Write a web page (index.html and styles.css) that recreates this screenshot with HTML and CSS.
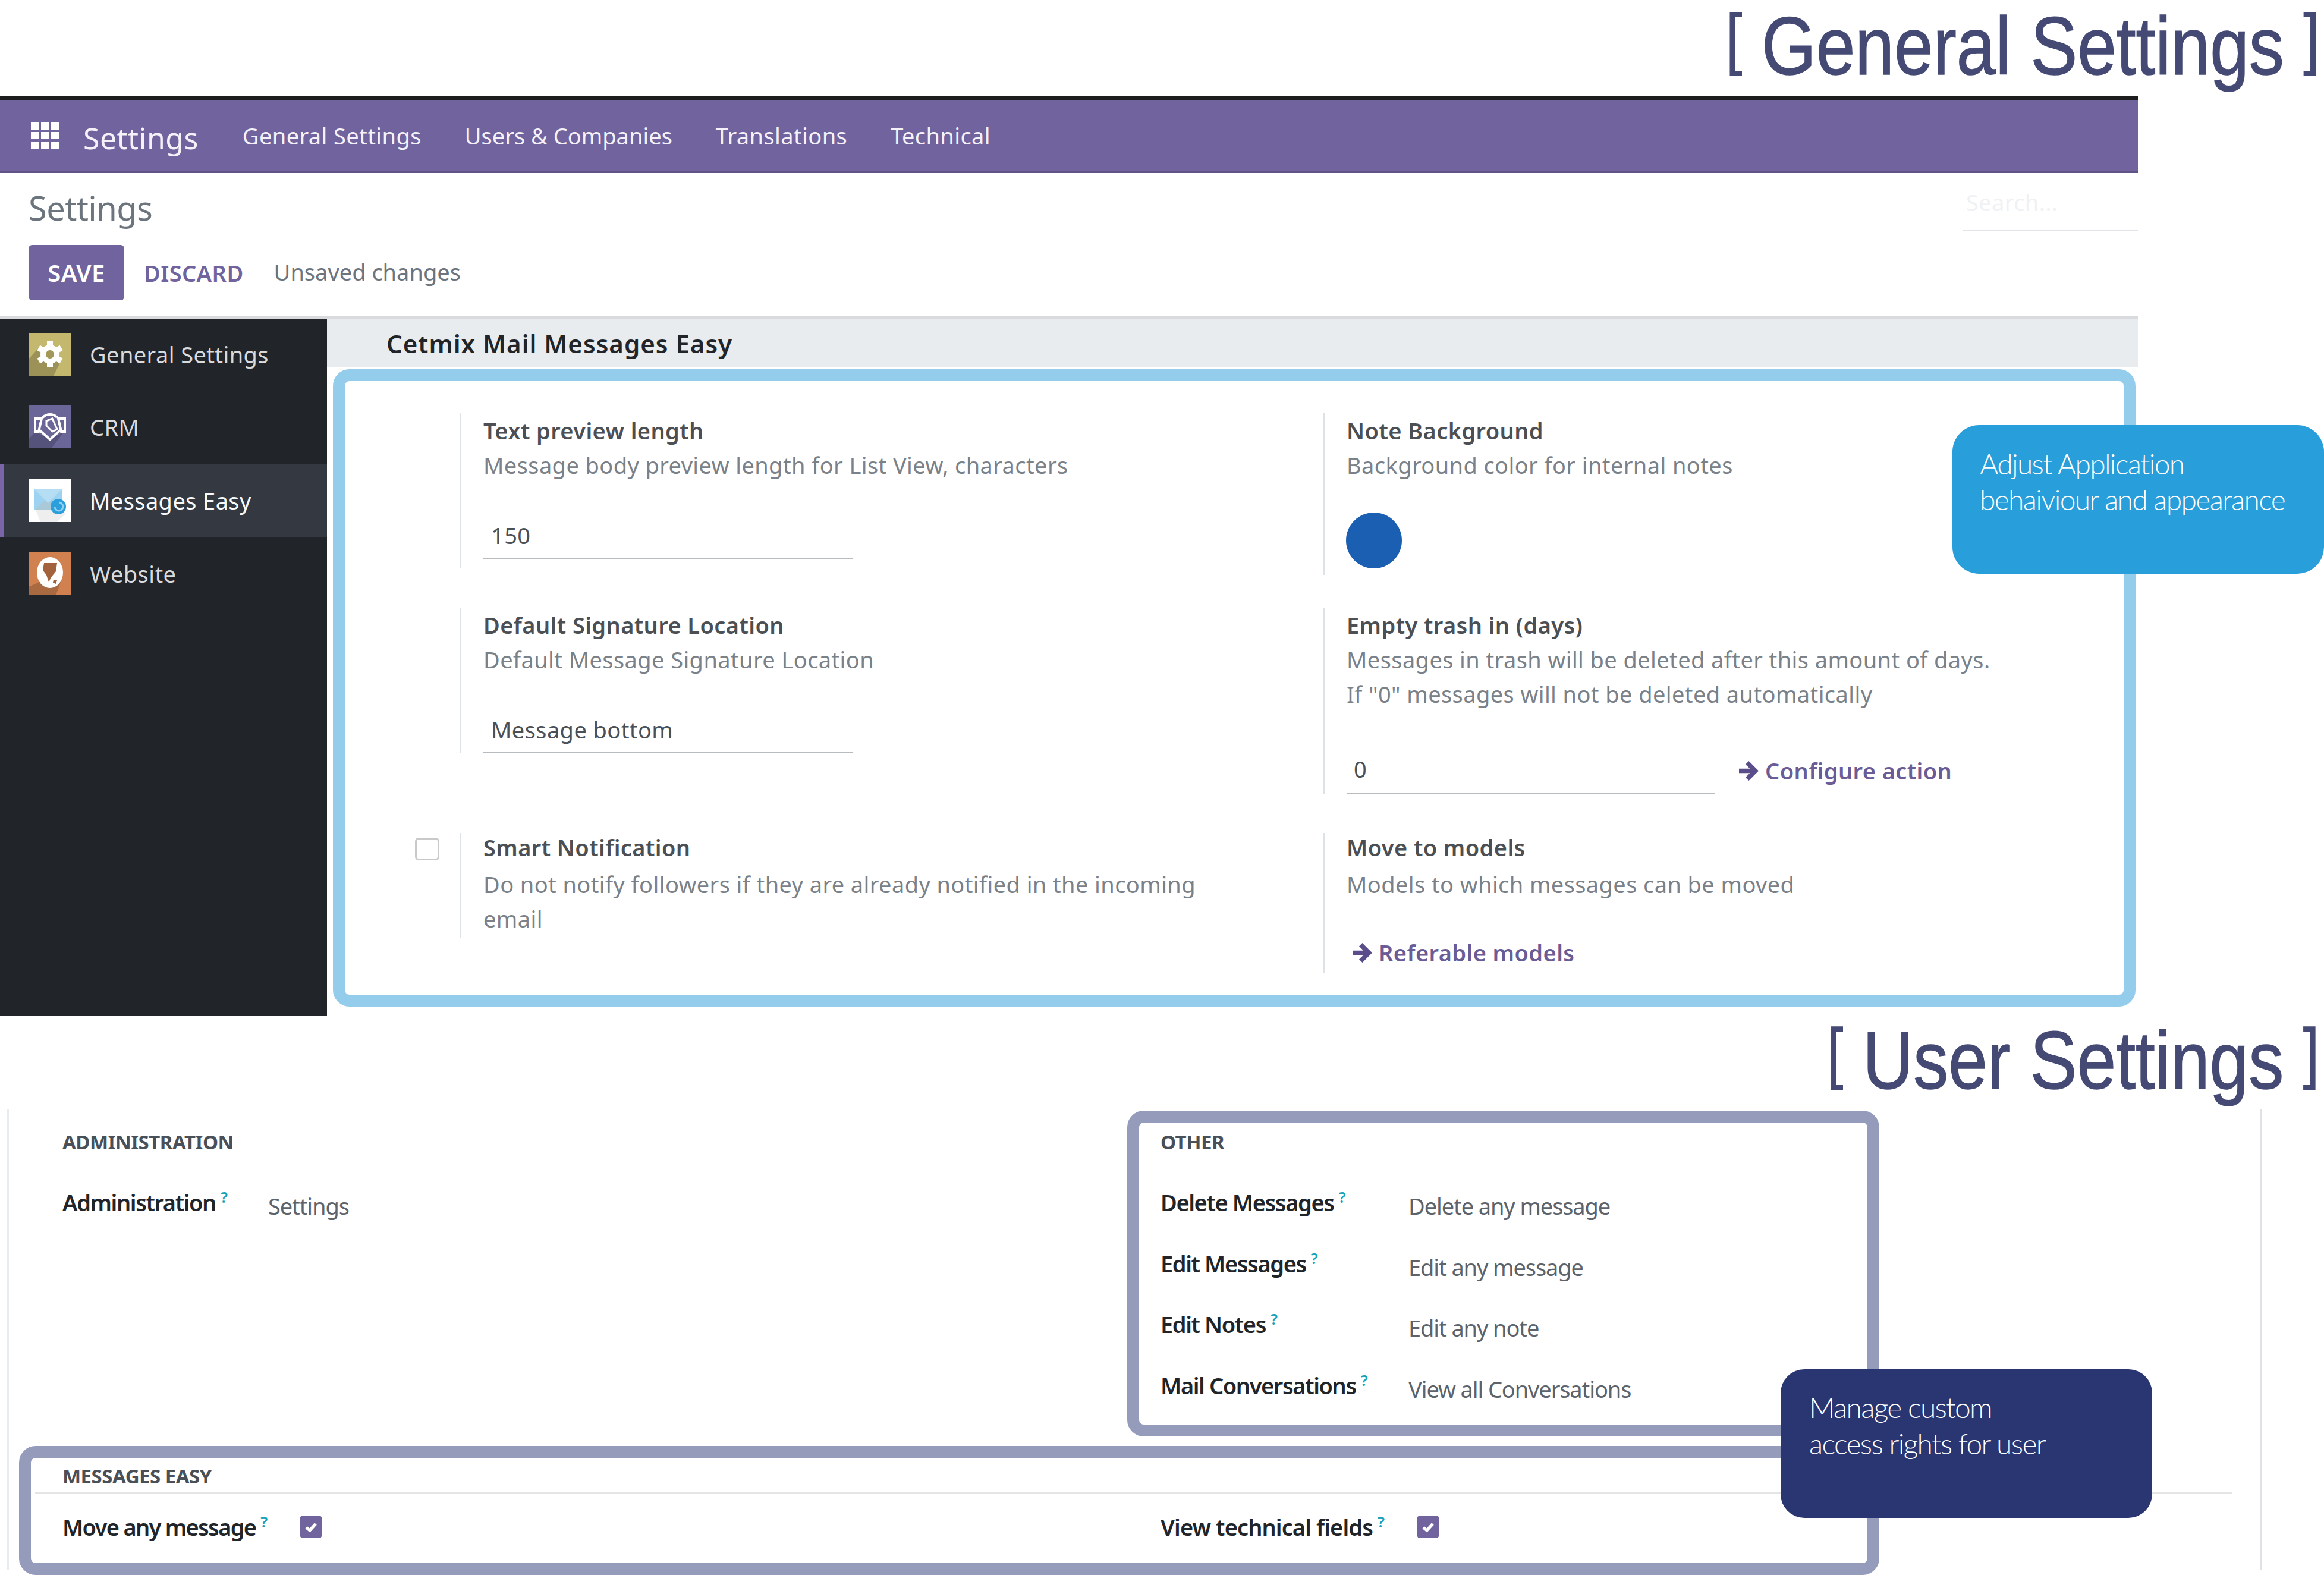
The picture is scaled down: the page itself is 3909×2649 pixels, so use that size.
FILE: index.html
```html
<!DOCTYPE html>
<html lang="en">
<head>
<meta charset="UTF-8">
<title>Messages Easy settings</title>
<link rel="stylesheet" href="styles.css">
</head>
<body>
<div class="page">
    <div class="caption caption-general"><span class="caption-text"><span class="bracket">[</span> General Settings <span class="bracket">]</span></span></div>

    <div class="app">
        <div class="topbar">
            <svg class="apps-icon" viewBox="0 0 47 44">
                <path fill="#fff" d="M0 0h13v12H0zM17 0h13v12H17zM34 0h13v12H34zM0 16h13v12H0zM17 16h13v12H17zM34 16h13v12H34zM0 32h13v12H0zM17 32h13v12H17zM34 32h13v12H34z"/>
            </svg>
            <span class="brand">Settings</span>
            <div class="menu">
                <span>General Settings</span>
                <span class="menu-tight">Users &amp; Companies</span>
                <span>Translations</span>
                <span>Technical</span>
            </div>
        </div>

        <div class="control-panel">
            <div class="panel-top">
                <div class="page-title">Settings</div>
                <div class="search">Search...</div>
            </div>
            <div class="panel-buttons">
                <span class="btn-save">SAVE</span>
                <span class="btn-discard">DISCARD</span>
                <span class="unsaved">Unsaved changes</span>
            </div>
        </div>

        <div class="main">
            <div class="sidebar">
                <div class="side-item">
                    <svg class="app-icon" viewBox="0 0 72 72">
                        <rect width="72" height="72" fill="#c4b86e"/>
                        <polygon points="18,24 52,52 42,72 0,72 0,44" fill="#9c9157"/>
                        <g fill="#fff">
                            <circle cx="36" cy="36" r="16"/>
                            <rect x="31" y="14" width="10" height="44"/>
                            <rect x="31" y="14" width="10" height="44" transform="rotate(60 36 36)"/>
                            <rect x="31" y="14" width="10" height="44" transform="rotate(120 36 36)"/>
                        </g>
                        <circle cx="36" cy="36" r="7" fill="#a39858"/>
                    </svg>
                    <span>General Settings</span>
                </div>
                <div class="side-item">
                    <svg class="app-icon" viewBox="0 0 72 72">
                        <rect width="72" height="72" fill="#6a6697"/>
                        <polygon points="12,44 36,58 60,44 38,72 0,72 0,56" fill="#55527b"/>
                        <g fill="none" stroke="#fff" stroke-width="4">
                            <path d="M24 20a17 17 0 0 1 24 0"/>
                            <path d="M11 22h11l-5 22h-6zM61 22H50l5 22h6z"/>
                            <path d="M19 42l17 15 17-15"/>
                            <path d="M30 26l10-4 8 18-8 4-10-10z" stroke-width="3"/>
                        </g>
                    </svg>
                    <span>CRM</span>
                </div>
                <div class="side-item side-item-active">
                    <svg class="app-icon" viewBox="0 0 72 72">
                        <rect width="72" height="72" fill="#fff"/>
                        <polygon points="10,46 46,46 62,58 48,72 20,72" fill="#eeeeee"/>
                        <rect x="10" y="17" width="46" height="35" fill="#9dd2f0"/>
                        <polygon points="10,52 33,30 56,52" fill="#aac9d8"/>
                        <polygon points="10,17 33,40 56,17" fill="#b5def5"/>
                        <circle cx="50" cy="46" r="13" fill="#2a9fdc"/>
                        <path d="M44 47a7 7 0 1 0 7-8" fill="none" stroke="#8fd0f2" stroke-width="3"/>
                    </svg>
                    <span>Messages Easy</span>
                </div>
                <div class="side-item">
                    <svg class="app-icon" viewBox="0 0 72 72">
                        <rect width="72" height="72" fill="#d0814f"/>
                        <polygon points="18,50 54,50 46,72 0,72 0,58" fill="#a96a42"/>
                        <ellipse cx="36" cy="34" rx="22" ry="26" fill="#fff"/>
                        <path d="M26 18h22l-2 14-8 10-4 8-4-12-6-8zM42 46l6 1-2 6-5-2z" fill="#a2633c"/>
                    </svg>
                    <span>Website</span>
                </div>
            </div>

            <div class="content">
                <div class="band">Cetmix Mail Messages Easy</div>
                <div class="settings">
                    <div class="setting">
                        <div class="setting-box"></div>
                        <div class="setting-body body-tall">
                            <div class="setting-title">Text preview length</div>
                            <div class="setting-desc">Message body preview length for List View, characters</div>
                            <div class="field">150</div>
                        </div>
                    </div>
                    <div class="setting">
                        <div class="setting-box"></div>
                        <div class="setting-body body-color">
                            <div class="setting-title">Note Background</div>
                            <div class="setting-desc">Background color for internal notes</div>
                            <div class="color-dot"></div>
                        </div>
                    </div>
                    <div class="setting">
                        <div class="setting-box"></div>
                        <div class="setting-body">
                            <div class="setting-title">Default Signature Location</div>
                            <div class="setting-desc">Default Message Signature Location</div>
                            <div class="field">Message bottom</div>
                        </div>
                    </div>
                    <div class="setting">
                        <div class="setting-box"></div>
                        <div class="setting-body">
                            <div class="setting-title">Empty trash in (days)</div>
                            <div class="setting-desc">Messages in trash will be deleted after this amount of days.<br>If "0" messages will not be deleted automatically</div>
                            <div class="field-row">
                                <div class="field field-short">0</div>
                                <span class="link link-configure">
                                    <svg class="arrow" viewBox="3 3 18 18"><path d="M12 3l9 9-9 9-3-3 4-4H3v-4h10L9 6z"/></svg>Configure action
                                </span>
                            </div>
                        </div>
                    </div>
                    <div class="setting">
                        <div class="setting-box"><span class="check-empty"></span></div>
                        <div class="setting-body body-last">
                            <div class="setting-title">Smart Notification</div>
                            <div class="setting-desc">Do not notify followers if they are already notified in the incoming<br>email</div>
                        </div>
                    </div>
                    <div class="setting">
                        <div class="setting-box"></div>
                        <div class="setting-body body-last">
                            <div class="setting-title">Move to models</div>
                            <div class="setting-desc">Models to which messages can be moved</div>
                            <span class="link link-models">
                                <svg class="arrow" viewBox="3 3 18 18"><path d="M12 3l9 9-9 9-3-3 4-4H3v-4h10L9 6z"/></svg>Referable models
                            </span>
                        </div>
                    </div>
                </div>
            </div>
        </div>
    </div>

    <div class="caption caption-user"><span class="caption-text"><span class="bracket">[</span> User Settings <span class="bracket">]</span></span></div>

    <div class="user-form">
        <div class="groups groups-top">
            <div>
                <div class="group-title">ADMINISTRATION</div>
                <div class="acl-row acl-narrow">
                    <span class="acl-label">Administration<sup class="tip">?</sup></span>
                    <span class="acl-value">Settings</span>
                </div>
            </div>
            <div>
                <div class="group-title">OTHER</div>
                <div class="acl-row acl-wide">
                    <span class="acl-label">Delete Messages<sup class="tip">?</sup></span>
                    <span class="acl-value">Delete any message</span>
                </div>
                <div class="acl-row acl-wide">
                    <span class="acl-label">Edit Messages<sup class="tip">?</sup></span>
                    <span class="acl-value">Edit any message</span>
                </div>
                <div class="acl-row acl-wide">
                    <span class="acl-label">Edit Notes<sup class="tip">?</sup></span>
                    <span class="acl-value">Edit any note</span>
                </div>
                <div class="acl-row acl-wide">
                    <span class="acl-label">Mail Conversations<sup class="tip">?</sup></span>
                    <span class="acl-value">View all Conversations</span>
                </div>
            </div>
        </div>
        <div class="group-title group-title-line">MESSAGES EASY</div>
        <div class="groups">
            <div class="check-row check-row-tight">
                <span class="acl-label">Move any message<sup class="tip">?</sup></span>
                <svg class="check-on" viewBox="0 0 38 38"><rect width="38" height="38" rx="6" fill="#71639e"/><path d="M11 20l6 5 10-11" fill="none" stroke="#fff" stroke-width="5"/></svg>
            </div>
            <div class="check-row check-row-loose">
                <span class="acl-label">View technical fields<sup class="tip">?</sup></span>
                <svg class="check-on" viewBox="0 0 38 38"><rect width="38" height="38" rx="6" fill="#71639e"/><path d="M11 20l6 5 10-11" fill="none" stroke="#fff" stroke-width="5"/></svg>
            </div>
        </div>
    </div>

    <!-- annotation frames and callouts drawn over the screenshots -->
    <div class="frame frame-blue"></div>
    <div class="frame frame-other"></div>
    <div class="frame frame-easy"></div>
    <div class="callout callout-blue">Adjust Application<br>behaiviour and appearance</div>
    <div class="callout callout-navy">Manage custom<br>access rights for user</div>
</div>
</body>
</html>
```
FILE: styles.css
```css
html, body {
    margin: 0;
    background-color: #ffffff;
}
body {
    font-family: "Noto Sans", "Liberation Sans", sans-serif;
    font-size: 38px;
    line-height: 58px;
    color: #495057;
}
.page {
    position: relative;
    width: 3909px;
    height: 2649px;
    overflow: hidden;
}

/* captions */
.caption {
    display: flex;
    justify-content: flex-end;
    align-items: flex-start;
    padding-right: 8px;
    font-family: "Liberation Sans", sans-serif;
    font-size: 138px;
    color: #454a75;
    -webkit-text-stroke: 1.5px #454a75;
}
.caption-general {
    height: 161px;
    line-height: 154px;
}
.caption-user {
    height: 157px;
    line-height: 150px;
}
.caption-text {
    display: inline-block;
    white-space: nowrap;
    transform: scaleX(0.855);
    transform-origin: right center;
}
.bracket {
    position: relative;
    top: -22px;
    font-size: 113px;
}

/* top bar */
.app {
    width: 3596px;
    letter-spacing: 0.4px;
}
.topbar {
    display: flex;
    align-items: center;
    height: 120px;
    padding-left: 52px;
    background-color: #71639e;
    border-top: 7px solid #1d1d1d;
    border-bottom: 3px solid #5f5385;
    color: #f4f2f8;
}
.apps-icon {
    width: 47px;
    height: 44px;
}
.brand {
    margin-left: 41px;
    margin-top: 8px;
    font-size: 50px;
    letter-spacing: 0.45px;
}
.menu {
    display: flex;
    gap: 73px;
    margin-left: 74px;
}
.menu-tight {
    letter-spacing: 0;
}

/* control panel */
.control-panel {
    height: 245px;
    padding-left: 48px;
    border-bottom: 4px solid #d8dadd;
    box-sizing: border-box;
}
.panel-top {
    display: flex;
    justify-content: space-between;
    align-items: flex-end;
    height: 98px;
}
.page-title {
    font-size: 56px;
    line-height: 80px;
    letter-spacing: -0.6px;
    color: #6c757d;
}
.search {
    width: 289px;
    padding: 0 0 17px 6px;
    border-bottom: 3px solid #e2e4ea;
    color: #f0f1f4;
}
.panel-buttons {
    display: flex;
    align-items: center;
    margin-top: 23px;
}
.btn-save {
    width: 161px;
    height: 93px;
    line-height: 93px;
    text-align: center;
    font-size: 40px;
    font-weight: 600;
    color: #ffffff;
    background-color: #71639e;
    border-radius: 6px;
}
.btn-discard {
    margin-left: 33px;
    font-weight: 600;
    color: #71639e;
}
.unsaved {
    margin: 0 0 3px 51px;
    letter-spacing: 0;
    color: #6c757d;
}

/* main area */
.main {
    display: flex;
    height: 1172px;
}
.sidebar {
    width: 550px;
    flex: none;
    background-color: #212529;
    color: #d8dadd;
}
.side-item {
    display: flex;
    align-items: center;
    gap: 31px;
    height: 123.5px;
    padding-left: 48px;
}
.side-item:first-child {
    height: 120.5px;
}
.side-item-active {
    padding-left: 41px;
    border-left: 7px solid #7c64a8;
    background-color: #343841;
    color: #f8f9fa;
}
.app-icon {
    width: 72px;
    height: 72px;
    flex: none;
}
.content {
    flex: 1;
}
.band {
    height: 82px;
    line-height: 84px;
    padding-left: 100px;
    font-size: 42px;
    font-weight: 600;
    letter-spacing: 1px;
    color: #212529;
    background-color: #e9ecef;
}

/* settings grid */
.settings {
    display: grid;
    grid-template-columns: 1452px 1fr;
    grid-template-rows: 274px 326px auto;
    row-gap: 53px;
    align-items: start;
    margin: 77px 0 0 120px;
}
.setting {
    display: flex;
}
.setting-box {
    width: 103px;
    flex: none;
}
.setting-body {
    flex: 1;
    padding-left: 37px;
    border-left: 3px solid #dee2e6;
}
.body-tall {
    padding-bottom: 15px;
}
.body-color {
    padding-bottom: 11px;
}
.body-last .setting-title {
    margin-top: -5px;
}
.body-last {
    padding-bottom: 3px;
}
.body-last .setting-desc {
    margin-top: 4px;
}
.setting-title {
    font-weight: 600;
    color: #4c4f53;
}
.setting-desc {
    color: #7b8188;
}
.field {
    width: 608px;
    height: 67px;
    margin-top: 60px;
    padding-left: 13px;
    border-bottom: 2px solid #b9bcbf;
}
.field-short {
    width: 607px;
    height: 69px;
    padding-left: 12px;
    margin-top: 0;
}
.field-row {
    display: flex;
    align-items: flex-start;
    margin-top: 68px;
}
.color-dot {
    width: 94px;
    height: 94px;
    margin: 51px 0 0 -1px;
    border-radius: 50%;
    background-color: #1b5fb3;
}
.check-empty {
    display: block;
    width: 35px;
    height: 32px;
    margin: 8px 0 0 28px;
    border: 3px solid #c9c9c9;
    border-radius: 6px;
}
.link {
    display: inline-flex;
    align-items: center;
    font-weight: 600;
    color: #6a5c96;
}
.link-configure {
    margin: 3px 0 0 41px;
}
.link-models {
    margin: 57px 0 0 10px;
}
.arrow {
    width: 33px;
    height: 33px;
    margin-right: 11px;
    fill: #5b4d8a;
}

/* user form */
.user-form {
    width: 3697px;
    height: 743px;
    margin-left: 12px;
    padding: 32px 0 0 90px;
    letter-spacing: -1.4px;
    border-left: 3px solid #e9ecef;
    border-right: 3px solid #dee2e6;
}
.groups {
    display: grid;
    grid-template-columns: 1847px 1fr;
}
.groups-top {
    height: 562px;
}
.group-title {
    font-size: 33px;
    line-height: 48px;
    font-weight: 700;
    letter-spacing: -0.5px;
    color: #495057;
    margin-bottom: 48px;
}
.group-title-line {
    width: 3650px;
    margin: 0 0 26px -46px;
    padding: 0 0 3px 46px;
    border-bottom: 3px solid #e5e5e5;
}
.acl-row {
    display: grid;
    height: 102.5px;
}
.acl-narrow {
    grid-template-columns: 346px 1fr;
}
.acl-wide {
    grid-template-columns: 417px 1fr;
}
.acl-label {
    font-weight: 600;
    color: #212529;
}
.acl-value {
    padding-top: 6px;
    letter-spacing: -1.1px;
    color: #5c636a;
}
.tip {
    margin-left: 8px;
    font-size: 26px;
    line-height: 0;
    font-weight: 600;
    color: #17a2b8;
}
.check-row {
    display: flex;
    align-items: center;
}
.check-row-tight {
    letter-spacing: -1.7px;
}
.check-row-loose {
    letter-spacing: -0.9px;
}
.check-on {
    width: 38px;
    height: 38px;
    margin-left: 55px;
}

/* annotations */
.frame {
    position: absolute;
    box-sizing: border-box;
    border: 20px solid #959bbb;
    border-radius: 28px;
}
.frame-blue {
    left: 560px;
    top: 621px;
    width: 3032px;
    height: 1072px;
    border-color: #94cdeb;
}
.frame-other {
    left: 1896px;
    top: 1868px;
    width: 1265px;
    height: 548px;
}
.frame-easy {
    left: 32px;
    top: 2432px;
    width: 3129px;
    height: 217px;
}
.callout {
    position: absolute;
    box-sizing: border-box;
    font-family: Lato, sans-serif;
    font-size: 48px;
    font-weight: 300;
    letter-spacing: -1.7px;
    color: #ffffff;
}
.callout-blue {
    left: 3284px;
    top: 715px;
    width: 625px;
    height: 250px;
    padding: 35px 0 0 46px;
    line-height: 60px;
    background-color: #289fdb;
    border-radius: 45px;
}
.callout-navy {
    left: 2995px;
    top: 2303px;
    width: 625px;
    height: 250px;
    padding: 33px 0 0 48px;
    line-height: 61px;
    background-color: #2a3672;
    border-radius: 40px;
}
```
